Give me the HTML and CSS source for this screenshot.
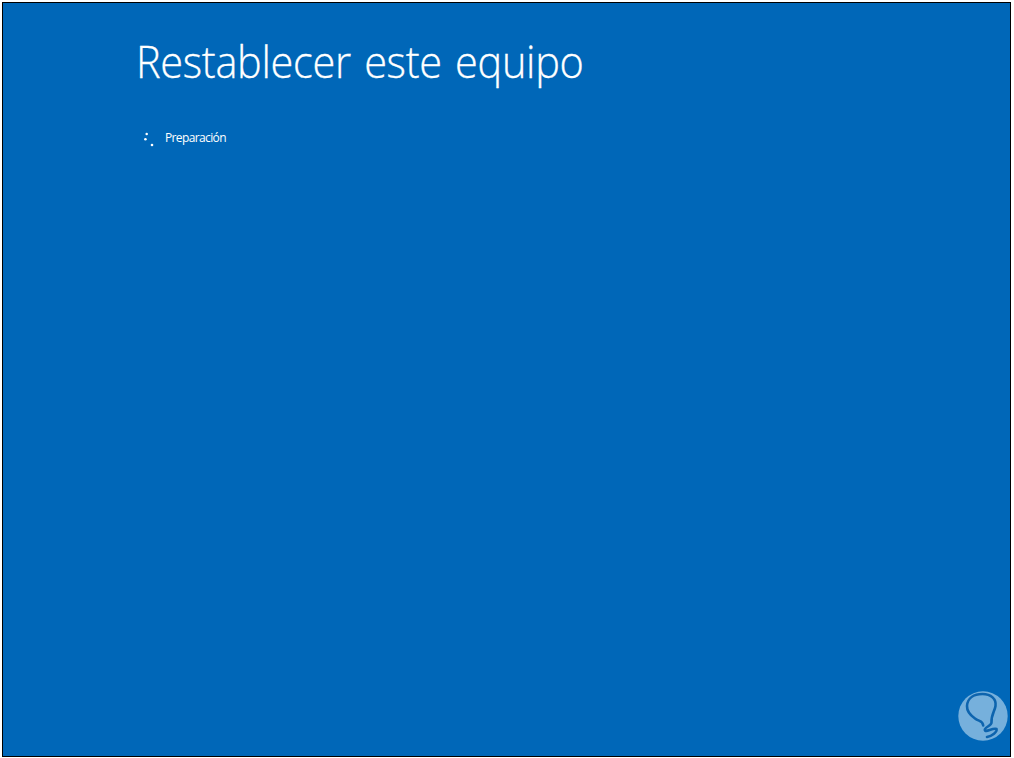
FILE: index.html
```
<!DOCTYPE html>
<html lang="es">
<head>
    <meta charset="UTF-8">
    <title>Restablecer este equipo</title>
    <link rel="stylesheet" href="styles.css">
</head>
<body>
    <div class="screen">
        <h1 class="title">Restablecer este equipo</h1>
        <div class="status">
            <svg class="spinner" width="12" height="16" viewBox="0 0 12 16">
                <circle cx="3.7" cy="2" r="1.25"/>
                <circle cx="2.4" cy="7.2" r="1.3"/>
                <circle cx="9" cy="13" r="1.3"/>
            </svg>
            <span class="statusText">Preparación</span>
        </div>
        <svg class="bulb" width="50" height="50" viewBox="0 0 50 50">
            <circle cx="25" cy="25" r="24.7" fill="#76b0dc"/>
            <path d="M25.2 34.5 C25 29.5 21 30.5 17 27.5 C12 24 8.8 20 9 15 C9.5 7 16 3 24.5 3 C33 3 38.5 8 37.5 15 C36.8 20 33 24 33.5 31.5 C33.5 35 26.5 36 26.8 39 C27 42 35 36.5 38.5 38 C39.5 41 34 45 29 46"/>
        </svg>
    </div>
</body>
</html>
```

FILE: styles.css
```
body {
    margin: 0;
    padding: 2px;
    background: #fff;
    font-family: "Open Sans", "Noto Sans", sans-serif;
    color: #fff;
    overflow: hidden;
}

.screen {
    position: relative;
    box-sizing: border-box;
    width: 1009px;
    height: 755px;
    padding: 28px 0 0 133px;
    border: 1px solid #000;
    background: #0067b8;
}

.title {
    margin: 0;
    font-size: 44px;
    font-weight: 300;
    line-height: 60px;
    letter-spacing: -0.3px;
    word-spacing: 3px;
    white-space: nowrap;
    -webkit-text-stroke: 0.3px #fff;
    transform: scaleX(0.942);
    transform-origin: 0 0;
}

.status {
    display: flex;
    align-items: center;
    height: 20px;
    margin: 37px 0 0 7px;
}

.spinner {
    margin: 3px 10px 0 0;
    fill: #fff;
}

.statusText {
    font-size: 12px;
    line-height: 20px;
    letter-spacing: -0.63px;
}

/* logo in the bottom corner */
.bulb {
    position: absolute;
    right: 2px;
    bottom: 15px;
}

.bulb path {
    fill: none;
    stroke: #0d64ae;
    stroke-width: 2.6;
    stroke-linecap: round;
    stroke-linejoin: round;
}
```
